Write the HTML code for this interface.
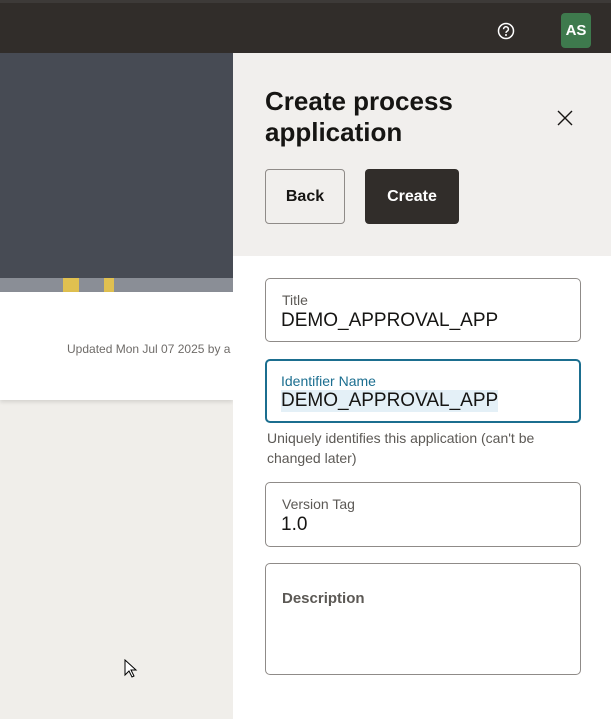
<!DOCTYPE html>
<html><head><style>
*{margin:0;padding:0;box-sizing:border-box}
body{width:611px;height:719px;overflow:hidden;position:relative;font-family:"Liberation Sans",sans-serif;background:#f0eeea}
.abs{position:absolute}
.top{left:0;top:0;width:611px;height:53px;background:#312d2a;border-top:3px solid #3d3a38}
.fld{position:absolute;left:265px;width:316px;border:1px solid #8f8b88;border-radius:5px;background:#fff}
.lbl{position:absolute;left:16px;font-size:14px;color:#5c5955}
.val{position:absolute;left:15px;font-size:19px;color:#161513}
</style></head><body>
<div class="abs top"></div>
<svg class="abs" style="left:497px;top:22px" width="18" height="18" viewBox="0 0 18 18"><circle cx="9" cy="9" r="7.5" fill="none" stroke="#fff" stroke-width="1.5"/><path d="M6.6 7.2a2.4 2.4 0 1 1 3.4 2.1c-.7.4-1 .8-1 1.6" fill="none" stroke="#fff" stroke-width="1.5"/><circle cx="9" cy="13" r="1" fill="#fff"/></svg>
<div class="abs" style="left:561px;top:13px;width:30px;height:35px;background:#3e7a4d;border-radius:4px;color:#fff;font-weight:bold;font-size:15px;text-align:center;line-height:35px">AS</div>
<div class="abs" style="left:0;top:53px;width:233px;height:225px;background:#474b54"></div>
<div class="abs" style="left:0;top:278px;width:233px;height:14px;background:#8a8e96"></div>
<div class="abs" style="left:63px;top:278px;width:16px;height:14px;background:#e0c050"></div>
<div class="abs" style="left:104px;top:278px;width:10px;height:14px;background:#e0c050"></div>
<div class="abs" style="left:0;top:292px;width:233px;height:108px;background:#fff;box-shadow:0 2px 4px rgba(0,0,0,.12)"></div>
<div class="abs" style="left:67px;top:342px;font-size:12px;color:#6f6c69;white-space:nowrap;width:166px;overflow:hidden">Updated Mon Jul 07 2025 by a</div>
<svg class="abs" style="left:124px;top:659px" width="14" height="20" viewBox="0 0 14 20"><path d="M1 1v15l4-4 3 6 2-1-3-6h5z" fill="#fff" stroke="#000"/></svg>
<div class="abs" style="left:233px;top:53px;width:378px;height:203px;background:#f1efed"></div>
<div class="abs" style="left:233px;top:256px;width:378px;height:463px;background:#fff"></div>
<div class="abs" style="left:265px;top:86px;font-size:26px;font-weight:bold;line-height:31px;color:#161513">Create process<br>application</div>
<svg class="abs" style="left:556px;top:109px" width="18" height="18" viewBox="0 0 18 18"><path d="M2 2L16 16M16 2L2 16" stroke="#161513" stroke-width="1.4"/></svg>
<div class="abs" style="left:265px;top:169px;width:80px;height:55px;border:1px solid #8f8b88;border-radius:4px;font-size:16px;font-weight:bold;color:#161513;text-align:center;line-height:53px">Back</div>
<div class="abs" style="left:365px;top:169px;width:94px;height:55px;background:#312d2a;border-radius:4px;font-size:16px;font-weight:bold;color:#fff;text-align:center;line-height:55px">Create</div>
<div class="fld" style="top:278px;height:64px"><div class="lbl" style="top:13px">Title</div><div class="val" style="top:31px">DEMO_APPROVAL_APP</div></div>
<div class="fld" style="top:359px;height:64px;border:2px solid #1b6e8f"><div class="lbl" style="top:12px;left:14px;color:#1b6e8f">Identifier Name</div><div class="val" style="top:29px;left:14px;background:#e4f0f7">DEMO_APPROVAL_APP</div></div>
<div class="abs" style="left:267px;top:428px;width:320px;font-size:14px;line-height:20px;color:#5c5955">Uniquely identifies this application (can't be changed later)</div>
<div class="fld" style="top:482px;height:65px"><div class="lbl" style="top:13px">Version Tag</div><div class="val" style="top:31px">1.0</div></div>
<div class="fld" style="top:563px;height:112px"><div class="lbl" style="top:26px;font-weight:bold;font-size:15px">Description</div></div>
</body></html>
